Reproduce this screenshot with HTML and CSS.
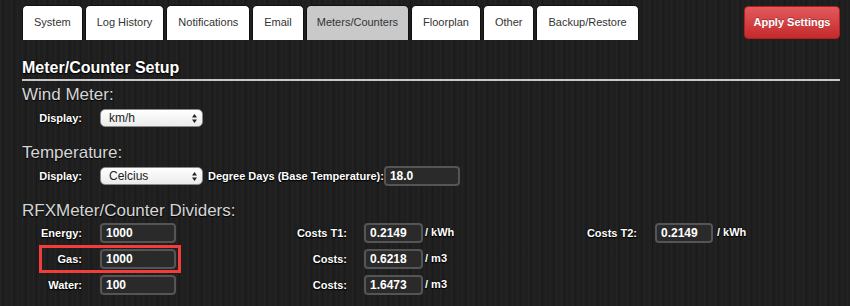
FILE: index.html
```html
<!DOCTYPE html>
<html>
	<head>
		<meta charset="UTF-8">
		<title>Settings</title>
		<link rel="stylesheet" href="styles.css">
	</head>
	<body>
		<div id="page">
			<div class="topbar">
				<ul class="tabs">
					<li>System</li>
					<li>Log History</li>
					<li>Notifications</li>
					<li>Email</li>
					<li class="active">Meters/Counters</li>
					<li>Floorplan</li>
					<li>Other</li>
					<li>Backup/Restore</li>
				</ul>
				<a href="javascript:;" class="apply">Apply Settings</a>
			</div>

			<h2 class="setup-title">Meter/Counter Setup</h2>

			<!-- wind -->
			<h3 class="group-title">Wind Meter:</h3>
			<div class="line">
				<label class="lbl">Display:</label>
				<div class="select">
					<span>km/h</span>
					<svg width="5" height="9" viewBox="0 0 5 9"><path d="M2.5 0 L5 3.5 L0 3.5 Z M0 5.5 L5 5.5 L2.5 9 Z" fill="#222"/></svg>
				</div>
			</div>

			<!-- temperature -->
			<h3 class="group-title">Temperature:</h3>
			<div class="line">
				<label class="lbl">Display:</label>
				<div class="select">
					<span>Celcius</span>
					<svg width="5" height="9" viewBox="0 0 5 9"><path d="M2.5 0 L5 3.5 L0 3.5 Z M0 5.5 L5 5.5 L2.5 9 Z" fill="#222"/></svg>
				</div>
				<label class="lbl degree">Degree Days (Base Temperature):</label>
				<input class="txt degree-in" type="text" value="18.0">
			</div>

			<!-- dividers -->
			<h3 class="group-title">RFXMeter/Counter Dividers:</h3>
			<div class="dividers">
				<div class="row">
					<label class="lbl c1">Energy:</label>
					<input class="txt in-a c2" type="text" value="1000">
					<label class="lbl c3">Costs T1:</label>
					<input class="txt in-b c4" type="text" value="0.2149">
					<span class="unit c5">/ kWh</span>
					<label class="lbl c6">Costs T2:</label>
					<input class="txt in-c c7" type="text" value="0.2149">
					<span class="unit unit2 c8">/ kWh</span>
				</div>
				<div class="row">
					<label class="lbl c1">Gas:</label>
					<input class="txt in-a c2" type="text" value="1000">
					<label class="lbl c3">Costs:</label>
					<input class="txt in-b c4" type="text" value="0.6218">
					<span class="unit c5">/ m3</span>
					<!--标记框-->
					<div class="mark"></div>
				</div>
				<div class="row">
					<label class="lbl c1">Water:</label>
					<input class="txt in-a c2" type="text" value="100">
					<label class="lbl c3">Costs:</label>
					<input class="txt in-b c4" type="text" value="1.6473">
					<span class="unit c5">/ m3</span>
				</div>
			</div>
		</div>
	</body>
</html>
```

FILE: styles.css
```css
*{
	margin: 0;
	padding: 0;
	box-sizing: border-box;
}
html,body{
	height: 306px;
}
body{
	background-color: #1f1f1f;
	background-image:
		repeating-linear-gradient(90deg, rgba(255,255,255,0.025) 0 1px, transparent 1px 3px, rgba(0,0,0,0.18) 3px 4px, transparent 4px 6px, rgba(255,255,255,0.015) 6px 7px, transparent 7px 11px);
	font-family: "Liberation Sans", Arial, sans-serif;
	color: #fff;
	overflow: hidden;
}
#page{
	padding: 5px 10px 0 22px;
}
.topbar{
	display: flex;
	justify-content: space-between;
	align-items: flex-start;
	height: 35px;
}
.tabs{
	display: flex;
	gap: 2px;
	list-style: none;
}
.tabs li{
	height: 35px;
	line-height: 33px;
	padding: 0 11px;
	background: #fff;
	border: 1px solid #111;
	border-bottom: none;
	border-radius: 5px 5px 0 0;
	color: #333;
	font-size: 11px;
}
.tabs li.active{
	background: #c9c9c9;
	padding: 0 10px;
}
.apply{
	display: block;
	width: 96px;
	height: 33px;
	margin-top: 1px;
	line-height: 31px;
	text-align: center;
	color: #fff;
	font-size: 11px;
	font-weight: bold;
	text-decoration: none;
	background: linear-gradient(#e25a5c, #c42a2c);
	border: 1px solid #b51d1f;
	border-radius: 4px;
	text-shadow: 0 -1px 0 rgba(0,0,0,0.3);
}
.setup-title{
	margin-top: 18px;
	padding-bottom: 2px;
	border-bottom: 2px solid #c8c8c8;
	font-size: 16px;
	line-height: 19px;
	font-weight: bold;
	color: #fff;
	text-shadow: 0 0 2px #000, 0 1px 1px #000;
}
.group-title{
	margin-top: 15px;
	font-size: 17px;
	line-height: 20px;
	font-weight: normal;
	color: #d6d6d6;
	text-shadow: 0 1px 1px #000;
}
.setup-title + .group-title{
	margin-top: 4px;
}
.line{
	display: flex;
	align-items: center;
	height: 20px;
	margin-top: 3px;
}
.lbl{
	font-size: 11px;
	font-weight: bold;
	color: #fff;
	text-align: right;
	text-shadow: 0 0 2px #000, 0 1px 1px #000;
	white-space: nowrap;
}
.line > .lbl:first-child{
	width: 60px;
}
.select{
	display: flex;
	justify-content: space-between;
	align-items: center;
	width: 103px;
	height: 18px;
	margin-left: 18px;
	padding: 0 5px 0 8px;
	background: linear-gradient(#ffffff, #ebebeb);
	border: 1px solid #8a8a8a;
	border-radius: 5px;
	color: #222;
	font-size: 12px;
}
.select svg{
	display: block;
}
.degree{
	margin-left: 5px;
}
.txt{
	display: block;
	height: 20px;
	padding: 0 4px;
	background: #2a2a2a;
	border: 2px solid #555;
	border-radius: 4px;
	color: #fff;
	font-family: "Liberation Sans", Arial, sans-serif;
	font-size: 12px;
	font-weight: bold;
	outline: none;
}
.degree-in{
	width: 76px;
	margin-left: 0;
}
.dividers{
	display: flex;
	flex-direction: column;
	gap: 6px;
	margin-top: 2px;
}
.row{
	display: grid;
	grid-template-columns: 60px 94px 171px 76px 50px 164px 76px auto;
	height: 20px;
	align-items: center;
}
.row > *{
	grid-row: 1;
}
.c1{ grid-column: 1; }
.c2{ grid-column: 2; }
.c3{ grid-column: 3; }
.c4{ grid-column: 4; }
.c5{ grid-column: 5; }
.c6{ grid-column: 6; }
.c7{ grid-column: 7; }
.c8{ grid-column: 8; }
.in-a{
	width: 76px;
	margin-left: 18px;
}
.in-b{
	width: 59px;
	margin-left: 17px;
}
.in-c{
	width: 58px;
	margin-left: 18px;
}
.unit{
	padding-left: 2px;
	margin-top: -2px;
	font-size: 11px;
	font-weight: bold;
	color: #fff;
	text-align: left;
	text-shadow: 0 0 2px #000, 0 1px 1px #000;
}
.unit2{
	padding-left: 4px;
}
.mark{
	grid-column: 1 / 3;
	align-self: stretch;
	margin: -4px -5px -4px 17px;
	border: 3px solid #f23d3d;
	pointer-events: none;
}
```
